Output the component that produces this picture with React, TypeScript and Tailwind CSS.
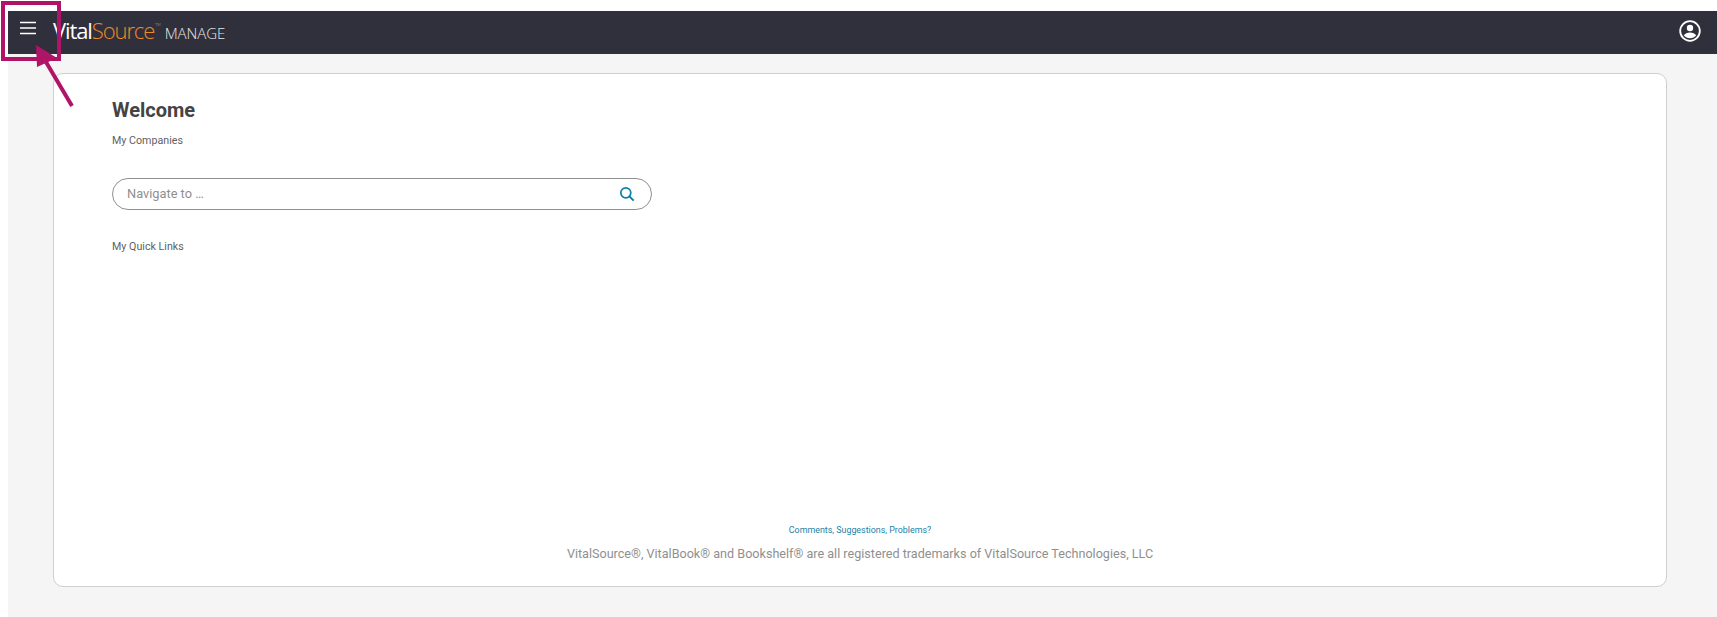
export default function App() {
  return (
    <div className="relative h-[617px] w-[1717px] overflow-hidden bg-white pl-2 pt-[11px] font-['Roboto',sans-serif]">
      <div className="flex h-[606px] flex-col bg-[#f5f5f5]">
        <header className="flex h-[43px] shrink-0 items-center bg-[#30303c] pl-[10px] pr-[15px] text-white">
          <svg width="20" height="16" viewBox="0 0 20 16" className="mb-[9px] shrink-0">
            <path d="M2 2.5h16M2 8h16M2 13.5h16" stroke="#fff" strokeWidth="1.4" fill="none" />
          </svg>
          <div className="mb-[6px] ml-[15px] flex items-baseline font-['Open_Sans',sans-serif] text-[22px] font-light leading-none tracking-[-1.1px]">
            <span className="font-normal">Vital</span>
            <span className="text-[#f08a24]">Source</span>
            <span className="ml-[1px] self-start text-[4px] leading-[12px] tracking-normal text-[#aaa]">TM</span>
            <span className="ml-[4px] text-[15px] tracking-[-0.1px] text-[#e8e8e8]">MANAGE</span>
          </div>
          <svg width="24" height="24" viewBox="0 0 24 24" className="mb-[3px] ml-auto">
            <circle cx="12" cy="12" r="9.8" stroke="#fff" strokeWidth="1.8" fill="none" />
            <circle cx="12" cy="9" r="3.2" fill="#fff" />
            <path d="M5.8 16.6c1-2.3 3.6-3.2 6.2-3.2s5.2 .9 6.2 3.2c-1.5 1.7-3.8 2.6-6.2 2.6s-4.7-.9-6.2-2.6z" fill="#fff" />
          </svg>
        </header>
        <main className="ml-[45px] mr-[50px] mt-[19px] flex h-[514px] flex-col rounded-[10px] border border-[#cfcfcf] bg-white pl-[58px] pr-[58px]">
          <h1 className="mt-[24px] text-[20px] font-bold leading-[24px] text-[#444]">Welcome</h1>
          <p className="mt-[12px] text-[10.7px] leading-[14px] text-[#5f5f5f]">My Companies</p>
          <div className="mt-[30px] flex h-[32px] w-[540px] items-center justify-between rounded-full border border-[#8f8f8f] pl-[14px] pr-[16px]">
            <span className="text-[12.8px] text-[#8f8f8f]">Navigate to …</span>
            <svg width="16" height="16" viewBox="0 0 16 16">
              <circle cx="6.8" cy="6.8" r="5" stroke="#0f7fa8" strokeWidth="1.7" fill="none" />
              <path d="M10.5 10.5l4.2 4.2" stroke="#0f7fa8" strokeWidth="1.9" fill="none" />
            </svg>
          </div>
          <p className="mt-[30px] text-[10.7px] leading-[14px] text-[#5f5f5f]">My Quick Links</p>
          <div className="mt-auto flex flex-col items-center pb-[24px]">
            <a className="text-[8.9px] leading-[12px] text-[#1a82a8]">Comments, Suggestions, Problems?</a>
            <p className="mt-[10px] text-[12.6px] leading-[16px] text-[#8f8f8f]">
              VitalSource®, VitalBook® and Bookshelf® are all registered trademarks of VitalSource Technologies, LLC
            </p>
          </div>
        </main>
      </div>
      <svg width="90" height="115" viewBox="0 0 90 115" className="absolute left-0 top-0">
        <rect x="3" y="3" width="56" height="56" fill="none" stroke="#b01467" strokeWidth="4" />
        <path d="M72 106L46 62" stroke="#b01467" strokeWidth="4" fill="none" />
        <path d="M36 45L57 58L37 67z" fill="#b01467" />
      </svg>
    </div>
  );
}
